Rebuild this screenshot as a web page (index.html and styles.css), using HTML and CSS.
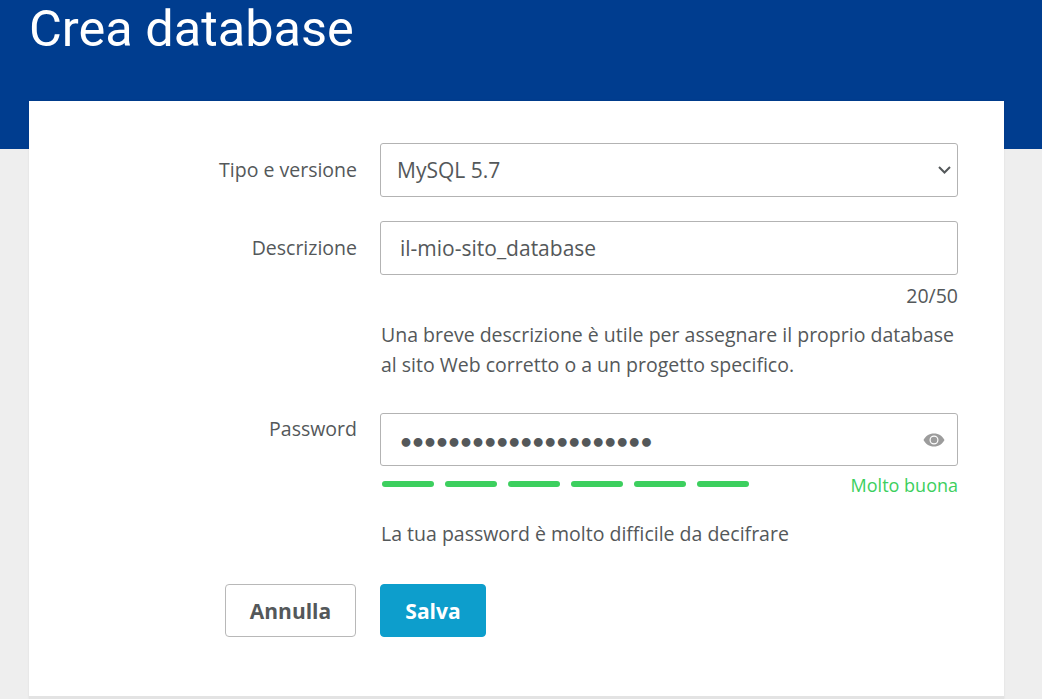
FILE: index.html
```html
<!DOCTYPE html>
<html lang="it">
<head>
<meta charset="utf-8">
<title>Crea database</title>
<link rel="stylesheet" href="styles.css">
</head>
<body>
<header class="hero">
  <h1 class="hero-title">Crea database</h1>
</header>
<main class="card">
  <form class="form">
    <div class="row">
      <label class="label label-mid" for="tipo">Tipo e versione</label>
      <div class="field select-wrap">
        <select class="control select" id="tipo">
          <option>MySQL 5.7</option>
        </select>
        <svg class="chevron" viewBox="0 0 13 8" width="13" height="8" aria-hidden="true">
          <path d="M1 1l5.500 5.500L12 1" fill="none" stroke="#54585a" stroke-width="2"/>
        </svg>
      </div>
    </div>
    <div class="row row-desc">
      <label class="label label-mid" for="descr">Descrizione</label>
      <div class="field">
        <input class="control input" id="descr" type="text" value="il-mio-sito_database">
        <div class="counter">20/50</div>
        <p class="help help-desc">Una breve descrizione è utile per assegnare il proprio database al sito Web corretto o a un progetto specifico.</p>
      </div>
    </div>
    <div class="row row-pass">
      <label class="label label-top" for="pass">Password</label>
      <div class="field">
        <div class="pass-wrap">
          <input class="control input input-pass" id="pass" type="password" value="abcdefghijklmnopqrstu">
          <svg class="eye" viewBox="0 0 22 14" width="22" height="14" aria-hidden="true">
            <path fill-rule="evenodd" d="M11 0.5C6.2 0.5 2.3 3.2 0.5 7c1.8 3.8 5.7 6.500 10.500 6.500S19.700 10.800 21.500 7C19.700 3.200 15.800 0.500 11 0.500zM11 2.500a4.500 4.500 0 1 1 0 9a4.500 4.500 0 0 1 0-9z"/>
            <circle cx="11" cy="7" r="3.300"/>
          </svg>
        </div>
        <div class="strength">
          <div class="bars">
            <span class="bar"></span><span class="bar"></span><span class="bar"></span><span class="bar"></span><span class="bar"></span><span class="bar"></span>
          </div>
          <span class="strength-text">Molto buona</span>
        </div>
        <p class="help help-pass">La tua password è molto difficile da decifrare</p>
      </div>
    </div>
    <div class="row row-actions">
      <div class="cancel-cell"><button class="btn btn-cancel" type="button">Annulla</button></div>
      <div class="field"><button class="btn btn-save" type="button">Salva</button></div>
    </div>
  </form>
</main>
</body>
</html>
```
FILE: styles.css
```css
* { box-sizing: border-box; }
html, body { margin: 0; padding: 0; height: 699px; overflow: hidden; }
body {
  background: #eeeeee;
  color: #54585a;
  font-family: "Open Sans", "Liberation Sans", sans-serif;
  font-size: 19.5px;
  line-height: 30px;
}
.hero {
  background: #003d8f;
  height: 149px;
  padding: 1px 29px 0;
}
.hero-title {
  margin: 0;
  color: #fff;
  font-family: "Roboto", sans-serif;
  font-weight: 400;
  font-size: 50.500px;
  line-height: 56px;
}
.card {
  width: 975px;
  height: 598px;
  margin: -48px 0 0 29px;
  padding-top: 42px;
  background: #fff;
  border-bottom: 3px solid #e3e3e3;
  box-shadow: 0 0 2px rgba(0, 0, 0, 0.08);
}
.row {
  display: grid;
  grid-template-columns: 327px 578px;
  column-gap: 24px;
}
.row-desc { margin-top: 24px; }
.row-pass { margin-top: 33px; }
.row-actions { margin-top: 35px; }
.label { text-align: right; display: block; margin-right: -1px; }
.label-mid { line-height: 54px; }
.label-top { line-height: 32px; }
.control {
  width: 100%;
  height: 54px;
  background: #fff;
  border: 1px solid #b3b3b3;
  border-radius: 3px;
  color: #54585a;
  font: inherit;
  font-size: 21px;
  outline: none;
}
.select-wrap { position: relative; }
.select { padding: 0 16px; appearance: none; -webkit-appearance: none; }
.chevron { position: absolute; right: 7px; top: 23px; }
.input { padding: 0 19px; }
.input-pass {
  height: 53px;
  padding: 7px 50px 0 17px;
  font-family: "DejaVu Sans", sans-serif;
  font-size: 25px;
  font-weight: 700;
  letter-spacing: -3.960px;
}
.counter { text-align: right; height: 30px; line-height: 42px; }
.help { margin: 0 0 0 1px; }
.help-desc { margin-top: 15px; }
.pass-wrap { position: relative; }
.eye {
  position: absolute;
  right: 13px;
  top: 20px;
  fill: #9c9c9c;
}
.strength {
  display: flex;
  justify-content: space-between;
  align-items: center;
  height: 30px;
  margin-top: 3px;
}
.bars { display: flex; gap: 11px; padding-left: 2px; }
.bar { width: 52px; height: 6px; border-radius: 3px; background: #3ccf5e; }
.strength-text { color: #3ccf5e; font-size: 18px; padding-top: 2px; }
.help-pass { margin-top: 20px; }
.cancel-cell { text-align: right; }
.btn {
  height: 53px;
  border-radius: 4px;
  font-family: inherit;
  font-size: 21px;
  font-weight: 700;
}
.btn-cancel { width: 131px; background: #fff; border: 1px solid #b8b8b8; color: #54585a; }
.btn-save { width: 106px; background: #0d9ecc; border: 1px solid #0d9ecc; color: #fff; }
```
